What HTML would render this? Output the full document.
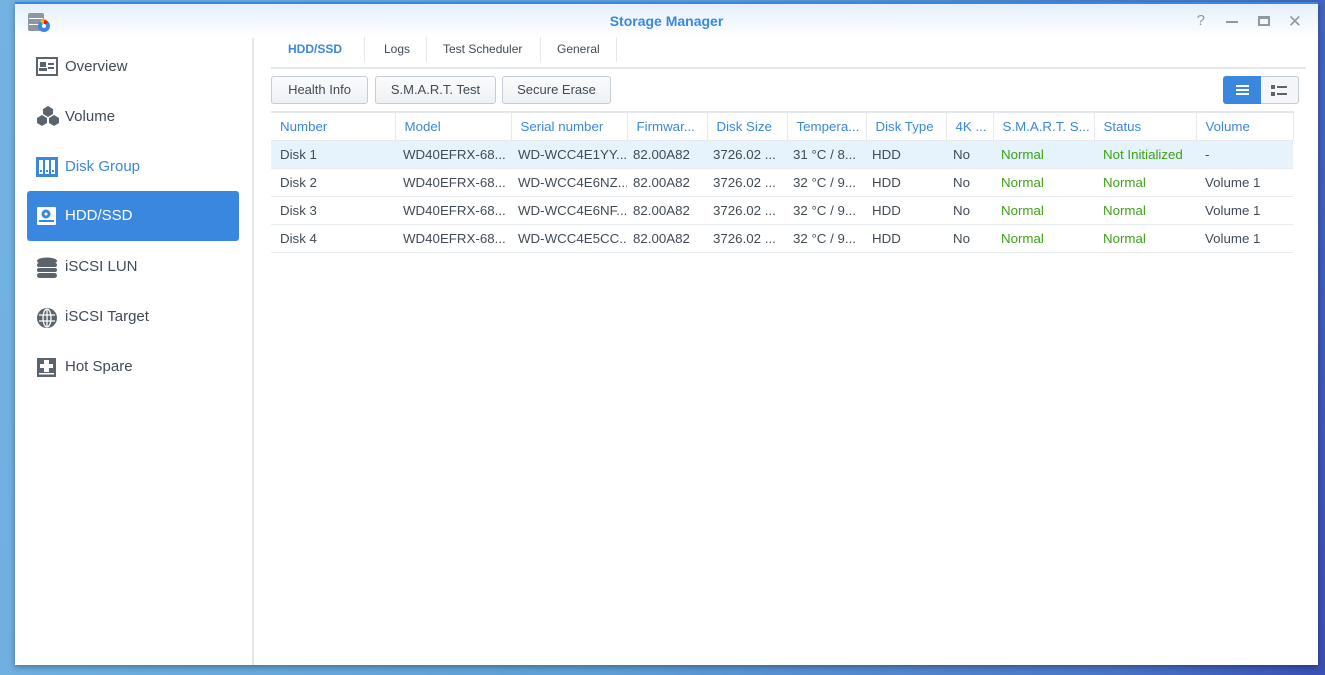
<!DOCTYPE html>
<html><head><meta charset="utf-8"><style>
*{box-sizing:border-box;margin:0;padding:0}
body{width:1325px;height:675px;overflow:hidden;position:relative;font-family:"Liberation Sans",sans-serif;font-size:13px;color:#414b55;background:linear-gradient(100deg,#72b3e3 0%,#5f9fd8 50%,#4a76c8 85%,#3a4fb5 100%)}
.win{position:absolute;left:15px;top:2px;width:1303px;height:663px;background:#fff;box-shadow:0 2px 6px rgba(0,0,0,.35);border-top:2px solid #3a87e0}
.title{position:absolute;left:0;top:0;width:100%;height:34px;background:linear-gradient(#e4effb,#fff);}
.title .t{position:absolute;left:0;right:0;top:9px;text-align:center;color:#3a87e0;font-weight:bold;font-size:14px}
.side{position:absolute;left:0;top:34px;width:239px;bottom:0;border-right:2px solid #e3e6ea}
.item{position:absolute;left:12px;width:212px;height:50px;font-size:15px;color:#414b55}
.item span{position:absolute;left:38px;top:16px}
.item svg{position:absolute;left:9px;top:15px}
.sel{background:#3a87e0;color:#fff;border-radius:3px}
.tab{position:absolute;top:42px;font-size:12px;color:#414b55}
.btn{position:absolute;top:76px;height:28px;border:1px solid #c6ccd3;border-radius:3px;background:linear-gradient(#fafbfc,#eef1f4);font-size:13px;text-align:center;line-height:26px;color:#414b55}
table{position:absolute;left:271px;top:111px;border-collapse:collapse;table-layout:fixed;width:1022px;border-top:2px solid #e4e8ec;font-size:13.3px}
td{height:28px;padding-left:9px;white-space:nowrap;overflow:hidden;border-bottom:1px solid #e8ebee}
tr.h td{color:#3a87e0;border-right:1px solid #e8ebee;border-bottom:1px solid #e8ebee}
tr.s td{background:#e6f2fc}
.g{color:#3ca312}
</style></head><body>
<div class="win">
<div class="title"><div class="t">Storage Manager</div>
<svg style="position:absolute;left:12px;top:8px" width="24" height="22"><rect x="1" y="1" width="16" height="18" rx="2" fill="#8d97a3"/><rect x="2" y="6" width="14" height="1" fill="#fff"/><rect x="2" y="12" width="14" height="1" fill="#fff"/><circle cx="17" cy="14" r="6" fill="#3a87e0"/><path d="M17 14 L13 9 A6 6 0 0 1 20 8Z" fill="#f5b800"/><path d="M17 14L17 8A6 6 0 0 1 21 10Z" fill="#e02020"/><circle cx="17" cy="14" r="2" fill="#fff"/></svg>
<div style="position:absolute;right:113px;top:8px;color:#8f98a3;font-size:15px">?</div>
<div style="position:absolute;right:80px;top:17px;width:12px;height:2px;background:#8f98a3"></div>
<div style="position:absolute;right:48px;top:12px;width:12px;height:10px;border:2px solid #8f98a3;border-top-width:3px"></div>
<div style="position:absolute;right:16px;top:8px;color:#8f98a3;font-size:17px">✕</div>
</div>
<div class="side">
<div class="item" style="top:4px"><svg width="22" height="20"><rect x="1" y="1" width="20" height="17" fill="none" stroke="#5b636d" stroke-width="2"/><rect x="4" y="5" width="6" height="5" fill="#5b636d"/><rect x="3" y="11" width="8" height="3" fill="#5b636d"/><rect x="12" y="6" width="6" height="2" fill="#5b636d"/><rect x="12" y="10" width="6" height="2" fill="#5b636d"/></svg><span>Overview</span></div>
<div class="item" style="top:54px"><svg width="24" height="22" style="top:13px"><path d="M12 1l5 3v5l-5 3-5-3V4z M6 10l5 3v5l-5 3-5-3v-5z M18 10l5 3v5l-5 3-5-3v-5z" fill="#5b636d"/></svg><span>Volume</span></div>
<div class="item" style="top:104px;color:#3a87e0"><svg width="22" height="22"><rect x="0" y="0" width="22" height="20" fill="#3a87e0"/><rect x="3" y="3" width="4" height="14" fill="#fff"/><rect x="9" y="3" width="4" height="14" fill="#fff"/><rect x="15" y="3" width="4" height="14" fill="#fff"/><rect x="4" y="13" width="2" height="2" fill="#3a87e0"/><rect x="10" y="13" width="2" height="2" fill="#3a87e0"/><rect x="16" y="13" width="2" height="2" fill="#3a87e0"/></svg><span>Disk Group</span></div>
<div class="item sel" style="top:153px"><svg width="22" height="22"><rect x="1" y="1" width="19" height="18" rx="1" fill="#fff"/><circle cx="10" cy="8" r="4.5" fill="#3a87e0"/><circle cx="10" cy="8" r="1.5" fill="#fff"/><rect x="3" y="14" width="15" height="2" fill="#3a87e0"/></svg><span>HDD/SSD</span></div>
<div class="item" style="top:204px"><svg width="22" height="22"><ellipse cx="11" cy="4" rx="10" ry="3.5" fill="#5b636d"/><rect x="1" y="6" width="20" height="4" rx="2" fill="#5b636d"/><rect x="1" y="11" width="20" height="4" rx="2" fill="#5b636d"/><rect x="1" y="16" width="20" height="5" rx="2.5" fill="#5b636d"/></svg><span>iSCSI LUN</span></div>
<div class="item" style="top:254px"><svg width="22" height="22"><circle cx="11" cy="11" r="10" fill="#5b636d"/><g stroke="#fff" stroke-width="1.3" fill="none"><ellipse cx="11" cy="11" rx="4" ry="9"/><line x1="11" y1="2" x2="11" y2="20"/><line x1="3" y1="8" x2="19" y2="8"/><line x1="3" y1="14" x2="19" y2="14"/></g></svg><span>iSCSI Target</span></div>
<div class="item" style="top:304px"><svg width="22" height="22"><rect x="1" y="1" width="19" height="19" fill="#5b636d"/><rect x="8" y="3" width="5" height="12" fill="#fff"/><rect x="4" y="7" width="13" height="4" fill="#fff"/><rect x="3" y="16" width="15" height="1.5" fill="#fff"/></svg><span>Hot Spare</span></div>
</div>
</div>
<div style="position:absolute;left:271px;top:67px;width:1035px;height:2px;background:#e4e8ec"></div>
<div class="tab" style="left:288px;color:#3a87e0;font-weight:bold">HDD/SSD</div>
<div style="position:absolute;left:364px;top:37px;width:1px;height:25px;background:#e4e8ec"></div>
<div class="tab" style="left:384px">Logs</div>
<div style="position:absolute;left:426px;top:37px;width:1px;height:25px;background:#e4e8ec"></div>
<div class="tab" style="left:443px">Test Scheduler</div>
<div style="position:absolute;left:540px;top:37px;width:1px;height:25px;background:#e4e8ec"></div>
<div class="tab" style="left:557px">General</div>
<div style="position:absolute;left:616px;top:37px;width:1px;height:25px;background:#e4e8ec"></div>
<div class="btn" style="left:271px;width:97px">Health Info</div>
<div class="btn" style="left:375px;width:121px">S.M.A.R.T. Test</div>
<div class="btn" style="left:502px;width:109px">Secure Erase</div>
<div style="position:absolute;left:1223px;top:76px;width:38px;height:28px;background:#3a87e0;border-radius:3px 0 0 3px"><div style="position:absolute;left:13px;top:9px;width:13px;height:2px;background:#fff;box-shadow:0 4px #fff,0 8px #fff"></div></div>
<div style="position:absolute;left:1261px;top:76px;width:38px;height:28px;background:#f3f5f8;border:1px solid #c6ccd3;border-left:none;border-radius:0 3px 3px 0"><div style="position:absolute;left:10px;top:8px;width:4px;height:4px;background:#5b636d;box-shadow:0 7px #5b636d"></div><div style="position:absolute;left:16px;top:9px;width:10px;height:2px;background:#5b636d;box-shadow:0 7px #5b636d"></div></div>
<table>
<colgroup><col style="width:124px"><col style="width:116px"><col style="width:116px"><col style="width:80px"><col style="width:80px"><col style="width:79px"><col style="width:80px"><col style="width:47px"><col style="width:101px"><col style="width:102px"><col style="width:97px"></colgroup>
<tr class="h"><td>Number</td><td>Model</td><td>Serial number</td><td>Firmwar...</td><td>Disk Size</td><td>Tempera...</td><td>Disk Type</td><td>4K ...</td><td>S.M.A.R.T. S...</td><td>Status</td><td>Volume</td></tr>
<tr class="s"><td>Disk 1</td><td style="padding-left:8px">WD40EFRX-68...</td><td style="padding-left:7px">WD-WCC4E1YY...</td><td style="padding-left:6px">82.00A82</td><td style="padding-left:6px">3726.02 ...</td><td style="padding-left:6px">31 °C / 8...</td><td style="padding-left:6px">HDD</td><td style="padding-left:7px">No</td><td class="g" style="padding-left:8px">Normal</td><td class="g">Not Initialized</td><td>-</td></tr>
<tr><td>Disk 2</td><td style="padding-left:8px">WD40EFRX-68...</td><td style="padding-left:7px">WD-WCC4E6NZ...</td><td style="padding-left:6px">82.00A82</td><td style="padding-left:6px">3726.02 ...</td><td style="padding-left:6px">32 °C / 9...</td><td style="padding-left:6px">HDD</td><td style="padding-left:7px">No</td><td class="g" style="padding-left:8px">Normal</td><td class="g">Normal</td><td>Volume 1</td></tr>
<tr><td>Disk 3</td><td style="padding-left:8px">WD40EFRX-68...</td><td style="padding-left:7px">WD-WCC4E6NF...</td><td style="padding-left:6px">82.00A82</td><td style="padding-left:6px">3726.02 ...</td><td style="padding-left:6px">32 °C / 9...</td><td style="padding-left:6px">HDD</td><td style="padding-left:7px">No</td><td class="g" style="padding-left:8px">Normal</td><td class="g">Normal</td><td>Volume 1</td></tr>
<tr><td>Disk 4</td><td style="padding-left:8px">WD40EFRX-68...</td><td style="padding-left:7px">WD-WCC4E5CC...</td><td style="padding-left:6px">82.00A82</td><td style="padding-left:6px">3726.02 ...</td><td style="padding-left:6px">32 °C / 9...</td><td style="padding-left:6px">HDD</td><td style="padding-left:7px">No</td><td class="g" style="padding-left:8px">Normal</td><td class="g">Normal</td><td>Volume 1</td></tr>
</table>
</body></html>
